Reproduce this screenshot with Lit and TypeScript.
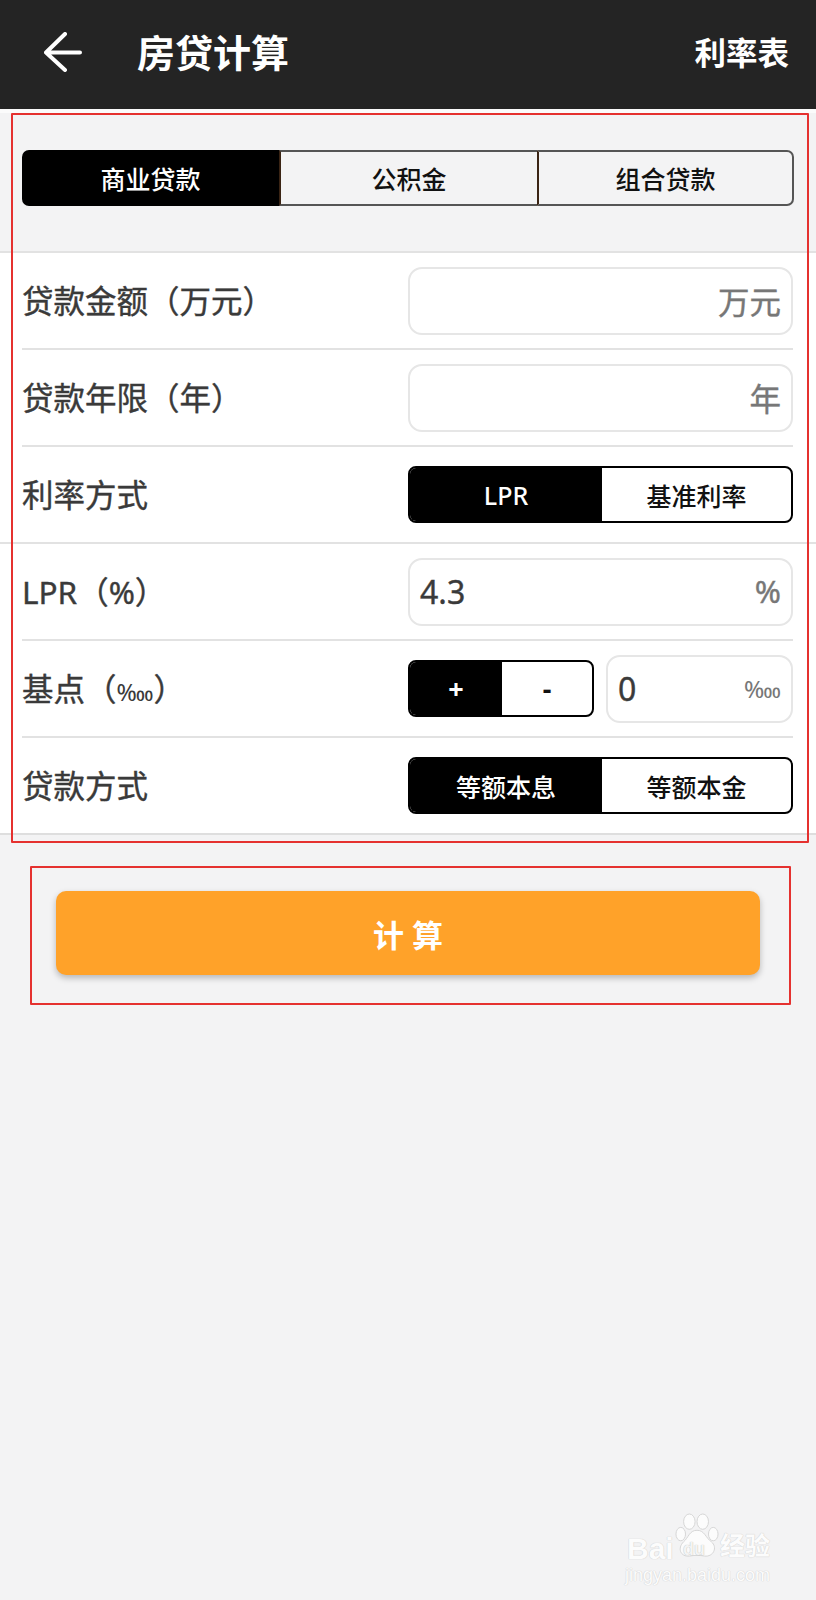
import { LitElement, html, css } from "lit";
import { customElement } from "lit/decorators.js";

@customElement("app-root")
export class AppRoot extends LitElement {
  static styles = css`
    :host {
      display: block;
      position: relative;
      width: 816px;
      height: 1600px;
      overflow: hidden;
      background: #f3f3f4;
      font-family: "Noto Sans", "Noto Sans CJK SC", "DejaVu Sans", sans-serif;
      color: #3a3a3a;
    }
    .header {
      height: 109px;
      background: #242424;
      display: flex;
      align-items: center;
      padding: 0 27px 0 44px;
      color: #fff;
    }
    .back { width: 38px; height: 40px; display: block; margin-right: 55px; margin-top: -6px; }
    .title { font-size: 38px; font-weight: 700; flex: 1; line-height: 1; margin-top: -6px; }
    .rate { font-size: 31.5px; font-weight: 700; line-height: 1; margin-top: -3px; }
    .tabs-wrap {
      border-top: 4px solid #fbfbfb;
      padding: 37px 22px 0;
      height: 142px;
      box-sizing: border-box;
    }
    .tabs {
      display: grid;
      grid-template-columns: 257px 258px 1fr;
      height: 56px;
      width: 772px;
    }
    .tabs div {
      display: flex; align-items: center; justify-content: center;
      font-size: 25px; font-weight: 500; color: #111;
      box-sizing: border-box;
      border: 2px solid #555;
      border-left: 2px solid #3a2414;
    }
    .tabs .on {
      background: #000; color: #fff;
      border: 0;
      border-radius: 7px 0 0 7px;
    }
    .tabs div:last-child { border-radius: 0 7px 7px 0; border-right-color: #555; }
    .tabs div:nth-child(2) { border-left-color: #3a2414; border-right: 0; }
    .form { background: #fff; border-bottom: 2px solid #dedede; }
    .row {
      height: 97px;
      box-sizing: border-box;
      margin: 0 23px 0 22px;
      border-top: 2px solid #e2e2e2;
      display: flex;
      align-items: center;
      justify-content: space-between;
    }
    .row.wide { margin: 0; padding: 0 23px 0 22px; }
    .label { font-size: 31.5px; font-weight: 400; color: #3a3a3a; line-height: 1; -webkit-text-stroke: 0.4px #3a3a3a; margin-top: 1px; }
    .label .tiny { font-size: 24px; -webkit-text-stroke: 0; }
    .control { width: 385px; flex: none; }
    .input {
      height: 68px;
      box-sizing: border-box;
      border: 2px solid #e6e6e6;
      border-radius: 14px;
      padding: 0 10px;
      display: flex;
      align-items: center;
      justify-content: space-between;
      font-size: 32px;
      font-weight: 400;
      -webkit-text-stroke: 0.4px currentColor;
    }
    .unit { color: #777; margin-left: auto; font-size: 31.5px; margin-top: -2px; }
    .unit.small { font-size: 24px; -webkit-text-stroke: 0; margin-top: 0; }
    .seg {
      height: 57px;
      box-sizing: border-box;
      border: 2px solid #000;
      border-radius: 8px;
      overflow: hidden;
      display: grid;
      grid-template-columns: 192px 1fr;
      font-size: 25px;
      font-weight: 500;
      color: #111;
    }
    .seg div { display: flex; align-items: center; justify-content: center; }
    .seg .on { background: #000; color: #fff; }
    .basis { display: flex; gap: 12px; align-items: center; }
    .basis .seg { width: 186px; grid-template-columns: 92px 1fr; flex: none; font-weight: 700; font-size: 27px; }
    .basis .input { flex: 1; }
    .action { padding: 56px 56px 0; }
    .btn {
      height: 84px;
      background: #ffa229;
      border-radius: 10px;
      box-shadow: 0 3px 6px rgba(0, 0, 0, 0.25);
      color: #fff;
      font-size: 31px;
      font-weight: 700;
      letter-spacing: 8px;
      padding-left: 8px;
      display: flex;
      align-items: center;
      justify-content: center;
    }
    .mark {
      position: absolute;
      border: 2px solid #e5312f;
      box-sizing: border-box;
      border-radius: 1px;
      pointer-events: none;
    }
    .mark.a { left: 11px; top: 113px; width: 798px; height: 730px; }
    .mark.b { left: 30px; top: 866px; width: 761px; height: 139px; }
    .wm {
      position: absolute;
      left: 625px;
      top: 1513px;
      width: 160px;
      height: 84px;
      color: #fcfcfc;
      font-family: "Liberation Sans", "Noto Sans CJK SC", sans-serif;
      text-shadow: 0 0 1px #d0d0d0, 0 0 1px #d0d0d0;
    }
    .wm svg { position: absolute; left: 50px; top: 0; width: 44px; height: 46px; }
    .wm span { position: absolute; white-space: nowrap; line-height: 1; }
    .wm .bai { left: 2px; top: 21px; font-size: 30px; font-weight: 700; }
    .wm .du { left: 58px; top: 27px; font-size: 18px; font-weight: 700; color: #f4f4f4; text-shadow: 0 0 1px #aaa; }
    .wm .jy { left: 95px; top: 21px; font-size: 25px; font-weight: 700; }
    .wm .url { left: 0; top: 53px; font-size: 18px; }
  `;

  render() {
    return html`
      <div class="header">
        <svg class="back" viewBox="0 0 38 40" fill="none" stroke="#fff" stroke-width="4" stroke-linecap="round" stroke-linejoin="round">
          <path d="M21 2 L2 20.5 L21 38 M2 20.5 H36" />
        </svg>
        <div class="title">房贷计算</div>
        <div class="rate">利率表</div>
      </div>
      <div class="tabs-wrap">
        <div class="tabs">
          <div class="on">商业贷款</div>
          <div>公积金</div>
          <div>组合贷款</div>
        </div>
      </div>
      <div class="form">
        <div class="row wide">
          <div class="label">贷款金额（万元）</div>
          <div class="control"><div class="input"><span class="unit">万元</span></div></div>
        </div>
        <div class="row">
          <div class="label">贷款年限（年）</div>
          <div class="control"><div class="input"><span class="unit">年</span></div></div>
        </div>
        <div class="row">
          <div class="label">利率方式</div>
          <div class="control"><div class="seg"><div class="on">LPR</div><div>基准利率</div></div></div>
        </div>
        <div class="row wide">
          <div class="label">LPR（%）</div>
          <div class="control"><div class="input"><span>4.3</span><span class="unit">%</span></div></div>
        </div>
        <div class="row">
          <div class="label">基点（<span class="tiny">‱</span>）</div>
          <div class="control basis">
            <div class="seg"><div class="on">+</div><div>-</div></div>
            <div class="input"><span>0</span><span class="unit small">‱</span></div>
          </div>
        </div>
        <div class="row">
          <div class="label">贷款方式</div>
          <div class="control"><div class="seg"><div class="on">等额本息</div><div>等额本金</div></div></div>
        </div>
      </div>
      <div class="action"><div class="btn">计算</div></div>
      <div class="mark a"></div>
      <div class="mark b"></div>
      <div class="wm">
        <svg viewBox="0 0 46 46" fill="#fcfcfc" stroke="#d4d4d4" stroke-width="1">
          <ellipse cx="15" cy="8" rx="6" ry="8" />
          <ellipse cx="29" cy="8" rx="6" ry="8" />
          <ellipse cx="6" cy="21" rx="5" ry="7" />
          <ellipse cx="40" cy="21" rx="5" ry="7" />
          <path d="M23 17 C31 17 32 25 38 29 C45 35 40 45 31 44 C26 43 20 43 15 44 C6 45 2 36 9 29 C14 25 15 17 23 17 Z" />
        </svg>
        <span class="bai">Bai</span>
        <span class="du">du</span>
        <span class="jy">经验</span>
        <span class="url">jingyan.baidu.com</span>
      </div>
    `;
  }
}
